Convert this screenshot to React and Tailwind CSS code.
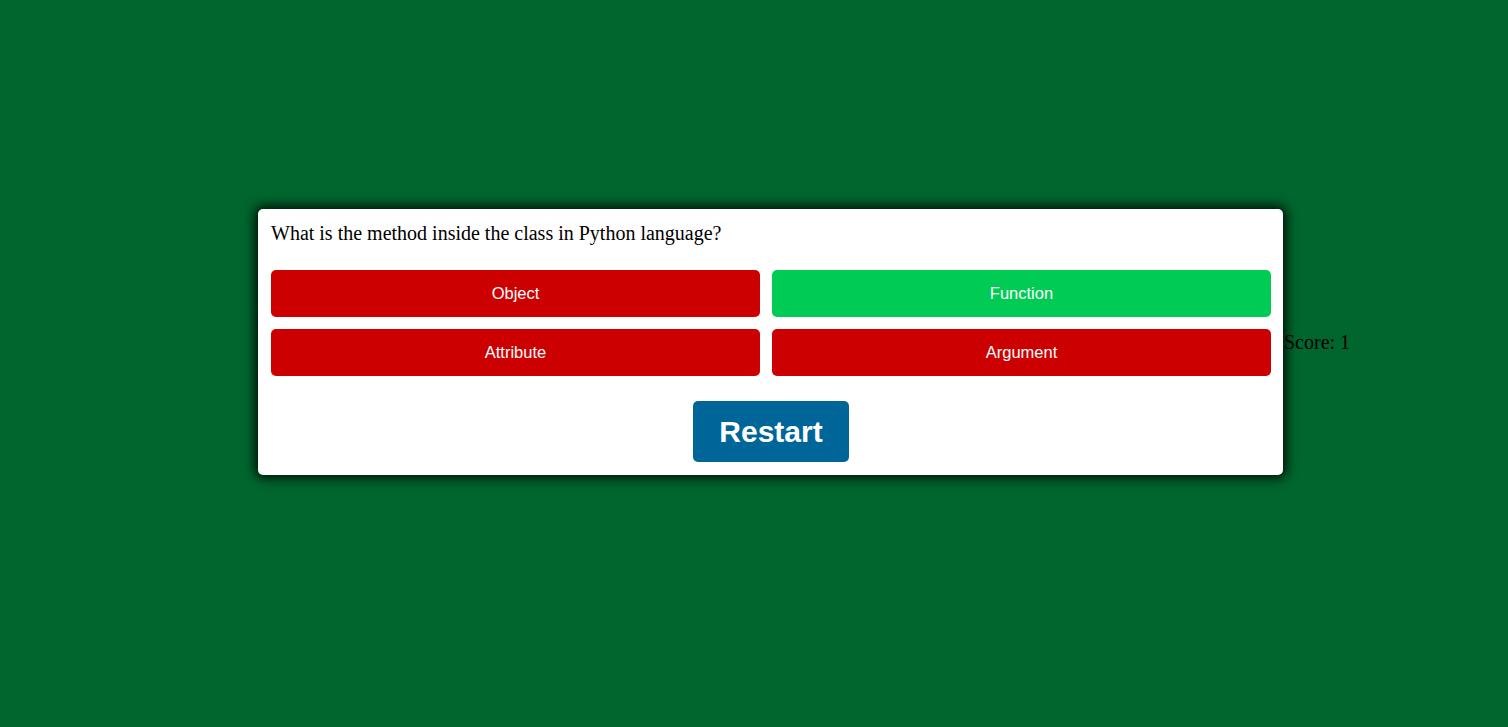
import React from 'react';

const answers = [
  { label: 'Object', color: 'bg-[#cc0000]' },
  { label: 'Function', color: 'bg-[#00cc55]' },
  { label: 'Attribute', color: 'bg-[#cc0000]' },
  { label: 'Argument', color: 'bg-[#cc0000]' },
];

export default function App() {
  return (
    <div className="min-h-[727px] w-full bg-[#00662d] flex flex-row items-center pl-[258px] pt-[209px] pb-[252px] font-['Liberation_Serif',serif] text-black">
      {/* Quiz card */}
      <div className="w-[1025px] bg-white rounded-[5px] shadow-[0_0_12px_3px_rgba(0,0,0,0.9)] pt-[13px] pb-[13px] pl-[13px] pr-[12px]">
        <div className="text-[20px] leading-[23px]">What is the method inside the class in Python language?</div>

        <div className="grid grid-cols-[489px_499px] gap-[12px] mt-[25px]">
          {answers.map((a) => (
            <button
              key={a.label}
              className={`${a.color} h-[47px] rounded-[5px] text-white text-[16.5px] font-['Liberation_Sans',Arial,sans-serif]`}
            >
              {a.label}
            </button>
          ))}
        </div>

        <div className="flex justify-center mt-[25px]">
          <button className="w-[156px] h-[61px] bg-[#006699] rounded-[5px] text-white text-[30px] font-bold font-['Liberation_Sans',Arial,sans-serif]">
            Restart
          </button>
        </div>
      </div>

      <div className="ml-[1px] text-[20px] leading-[23px]">Score: 1</div>
    </div>
  );
}
